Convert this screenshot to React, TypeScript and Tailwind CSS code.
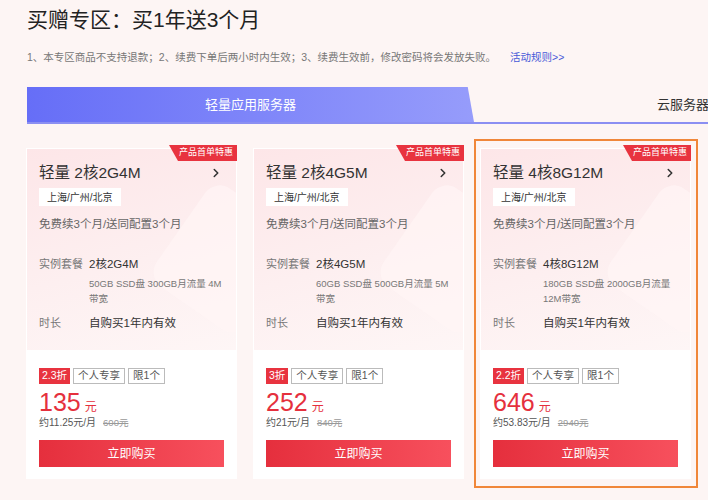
import { ChevronRight } from 'lucide-react';

interface Plan {
  readonly spec: string;
  readonly detail: string[];
  readonly discount: string;
  readonly price: string;
  readonly monthly: string;
  readonly original: string;
  readonly active?: boolean;
}

const PLANS: Plan[] = [
  {
    spec: '2核2G4M',
    detail: ['50GB SSD盘 300GB月流量 4M', '带宽'],
    discount: '2.3折',
    price: '135',
    monthly: '约11.25元/月',
    original: '600元',
  },
  {
    spec: '2核4G5M',
    detail: ['60GB SSD盘 500GB月流量 5M', '带宽'],
    discount: '3折',
    price: '252',
    monthly: '约21元/月',
    original: '840元',
  },
  {
    spec: '4核8G12M',
    detail: ['180GB SSD盘 2000GB月流量', '12M带宽'],
    discount: '2.2折',
    price: '646',
    monthly: '约53.83元/月',
    original: '2940元',
    active: true,
  },
];

function PlanCard({ plan }: { plan: Plan }) {
  return (
    <div
      className={
        plan.active
          ? 'w-[224px] shrink-0 border-2 border-[#f0873a] px-[4px] pt-[7px] pb-[7px]'
          : 'w-[224px] shrink-0 border-2 border-transparent px-[4px] pt-[7px] pb-[7px]'
      }
    >
      <div className="relative flex h-[331px] w-[211px] flex-col border border-white bg-white">
        <div className="relative overflow-hidden bg-[linear-gradient(165deg,#fde6e8_0%,#fdeff0_55%,#fef6f6_100%)] px-[12px] pt-[14px] pb-[19px]">
          <div className="absolute right-[-45px] top-[50px] h-[120px] w-[110px] rotate-[35deg] rounded-[18px] bg-[#fff5f5] opacity-70" />
          <div className="relative flex h-[20px] items-center justify-between">
            <span className="text-[15.5px] leading-[20px] text-[#333]">轻量 {plan.spec}</span>
            <ChevronRight size={14} strokeWidth={2.6} className="mr-[1px] text-[#333]" />
          </div>
          <div className="relative mt-[5px] flex">
            <span className="flex h-[18px] items-center bg-white px-[8px] text-[10px] text-[#333]">上海/广州/北京</span>
          </div>
          <div className="relative mt-[10px] text-[11.5px] leading-[16px] text-[#666]">免费续3个月/送同配置3个月</div>
          <div className="relative mt-[24px] flex">
            <span className="w-[50px] shrink-0 text-[11px] leading-[16px] text-[#777]">实例套餐</span>
            <div className="flex flex-col">
              <span className="text-[11.5px] leading-[16px] text-[#333]">{plan.spec}</span>
              <div className="mt-[4px] flex flex-col">
                {plan.detail.map(line => (
                  <span key={line} className="whitespace-nowrap text-[9.5px] leading-[15px] text-[#777]">{line}</span>
                ))}
              </div>
            </div>
          </div>
          <div className="relative mt-[9px] flex">
            <span className="w-[50px] shrink-0 text-[11px] leading-[16px] text-[#777]">时长</span>
            <span className="text-[11.5px] leading-[16px] text-[#333]">自购买1年内有效</span>
          </div>
        </div>
        <div className="flex flex-col px-[12px] pt-[18px]">
          <div className="flex gap-[3px]">
            <span className="flex h-[16px] items-center bg-[#e8333f] px-[3px] text-[10.5px] text-white">{plan.discount}</span>
            <span className="flex h-[16px] items-center border border-[#bbb] px-[4px] text-[10.5px] text-[#555]">个人专享</span>
            <span className="flex h-[16px] items-center border border-[#bbb] px-[4px] text-[10.5px] text-[#555]">限1个</span>
          </div>
          <div className="mt-[5px] flex items-baseline">
            <span className="text-[25px] leading-[26px] text-[#e5303d]">{plan.price}</span>
            <span className="ml-[4px] text-[12px] text-[#e5303d]">元</span>
          </div>
          <div className="flex items-center text-[10px] leading-[14px]">
            <span className="text-[#555]">{plan.monthly}</span>
            <span className="ml-[7px] text-[9.5px] text-[#999] line-through">{plan.original}</span>
          </div>
          <button className="mt-[10px] h-[27px] w-full bg-[linear-gradient(90deg,#e52f3d,#f7505d)] text-[12px] text-white">
            立即购买
          </button>
        </div>
        <div className="absolute right-[-1px] top-[-4px] flex h-[16px] items-center bg-[#e8333f] pl-[10px] pr-[4px] text-[9px] text-white [clip-path:polygon(0_0,100%_0,100%_100%,9px_100%)]">
          产品首单特惠
        </div>
      </div>
    </div>
  );
}

export default function App() {
  return (
    <div className="h-[500px] w-[708px] overflow-hidden bg-[#fdf5f4] font-['Liberation_Sans','Noto_Sans_CJK_SC',sans-serif]">
      <div className="px-[27px] pt-[7px]">
        <h1 className="text-[21px] leading-[26px] text-[#222]">买赠专区：买1年送3个月</h1>
        <div className="mt-[16px] flex items-center whitespace-nowrap text-[10.5px] leading-[16px] text-[#777]">
          <span>1、本专区商品不支持退款；2、续费下单后两小时内生效；3、续费生效前，修改密码将会发放失败。</span>
          <span className="ml-[14px] text-[#4759d8]">活动规则&gt;&gt;</span>
        </div>
      </div>
      <div className="ml-[27px] mt-[22px] flex w-[900px] border-b-2 border-[#8b8ff2]">
        <div className="flex h-[35px] w-[447px] shrink-0 items-center justify-center bg-[linear-gradient(90deg,#666ef7,#969cfb)] text-[13px] text-white [clip-path:polygon(0_0,98.6%_0,100%_100%,0_100%)]">
          轻量应用服务器
        </div>
        <div className="flex h-[35px] w-[443px] shrink-0 items-center justify-center pl-[4px] text-[13px] text-[#333]">
          云服务器CVM
        </div>
      </div>
      <div className="ml-[20px] mt-[15px] flex gap-[3px]">
        {PLANS.map(plan => (
          <PlanCard key={plan.spec} plan={plan} />
        ))}
      </div>
    </div>
  );
}
